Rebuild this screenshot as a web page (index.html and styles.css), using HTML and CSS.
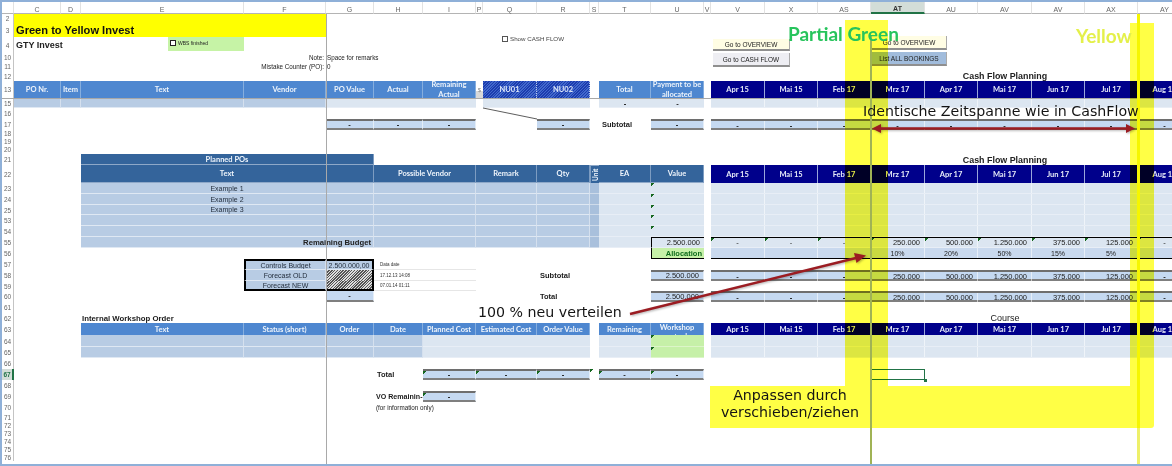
FILE: index.html
```html
<!DOCTYPE html>
<html lang="de">
<head>
<meta charset="utf-8">
<title>Green to Yellow Invest</title>
<link rel="stylesheet" href="styles.css">
</head>
<body>
<main class="page">
  <div class="row colhead">
    <span class="c-rh"></span>
    <span>C</span><span>D</span><span>E</span><span>F</span><span>G</span><span>H</span><span>I</span><span>P</span><span>Q</span><span>R</span><span>S</span><span>T</span><span>U</span><span>V</span><span>V</span><span>X</span><span>AS</span><span class="sel-col">AT</span><span>AU</span><span>AV</span><span>AV</span><span>AX</span><span>AY</span>
  </div>

  <div class="row h9"><span class="rh">2</span><div class="cell banner c-c to-g"></div></div>
  <div class="row h14"><span class="rh">3</span><div class="cell banner lt c-c to-g"><b class="title">Green to Yellow Invest</b></div></div>
  <div class="row h16"><span class="rh">4</span><div class="cell lt c-c to-f"><b class="subtitle">GTY Invest</b></div></div>
  <div class="row h9"><span class="rh">10</span><div class="cell n small c-e to-g">Note:</div><div class="cell lt small c-g to-p">Space for remarks</div></div>
  <div class="row h9"><span class="rh">11</span><div class="cell n small c-e to-g">Mistake Counter (PO):</div><div class="cell lt small c-g">0</div></div>
  <div class="row h10"><span class="rh">12</span><div class="cell heading c-au to-ax">Cash Flow Planning</div></div>
  <div class="row h17"><span class="rh">13</span>
    <div class="cell hd c-c">PO Nr.</div><div class="cell hd c-d">Item</div><div class="cell hd c-e">Text</div><div class="cell hd c-f">Vendor</div><div class="cell hd c-g">PO Value</div><div class="cell hd c-hh">Actual</div><div class="cell hd wrap c-i">Remaining Actual</div>
    <div class="cell tiny c-p">$</div>
    <div class="cell hatch c-q">NU01</div><div class="cell hatch c-r">NU02</div>
    <div class="cell hd c-t">Total</div><div class="cell hd wrap c-u">Payment to be allocated</div>
    <div class="band navy c-v to-end"><span>Apr 15</span><span>Mai 15</span><span>Feb 17</span><span>Mrz 17</span><span>Apr 17</span><span>Mai 17</span><span>Jun 17</span><span>Jul 17</span><span>Aug 17</span></div>
  </div>
  <div class="row h1 rule"></div>
  <div class="row h9"><span class="rh">15</span>
    <div class="cell mid c-c"></div><div class="cell mid c-d"></div><div class="cell mid c-e"></div><div class="cell mid c-f"></div>
    <div class="cell pale c-g"></div><div class="cell pale c-hh"></div><div class="cell pale c-i"></div>
    <div class="cell pale c-q"></div><div class="cell pale c-r"></div>
    <div class="cell pale bold c-t">-</div><div class="cell pale bold c-u">-</div>
    <div class="band pale c-v to-end"><span></span><span></span><span></span><span></span><span></span><span></span><span></span><span></span><span></span></div>
  </div>
  <div class="row h11"><span class="rh">16</span></div>
  <div class="row h11"><span class="rh">17</span>
    <div class="cell tot c-g">-</div><div class="cell tot c-hh">-</div><div class="cell tot c-i">-</div>
    <div class="cell tot c-r">-</div>
    <div class="cell label lt inset c-t">Subtotal</div>
    <div class="cell tot c-u">-</div>
    <div class="band tots c-v to-end"><span>-</span><span>-</span><span>-</span><span>-</span><span>-</span><span>-</span><span>-</span><span>-</span><span>-</span></div>
  </div>
  <div class="row h7"><span class="rh">18</span></div>
  <div class="row h8"><span class="rh">19</span></div>
  <div class="row h9"><span class="rh">20</span></div>
  <div class="row h11"><span class="rh">21</span><div class="cell hd dark c-e to-hh">Planned POs</div><div class="cell heading c-au to-ax">Cash Flow Planning</div></div>
  <div class="row h18"><span class="rh">22</span>
    <div class="cell hd dark c-e to-hh">Text</div><div class="cell hd dark c-hh to-p">Possible Vendor</div><div class="cell hd dark c-p to-r">Remark</div><div class="cell hd dark c-r">Qty</div><div class="cell hd dark vert c-s">Unit</div><div class="cell hd dark c-t">EA</div><div class="cell hd dark c-u">Value</div>
    <div class="band navy c-v to-end"><span>Apr 15</span><span>Mai 15</span><span>Feb 17</span><span>Mrz 17</span><span>Apr 17</span><span>Mai 17</span><span>Jun 17</span><span>Jul 17</span><span>Aug 17</span></div>
  </div>

  <div class="row h11"><span class="rh">23</span>
    <div class="cell mid body c-e to-hh">Example 1</div><div class="cell mid c-hh to-p"></div><div class="cell mid c-p to-r"></div><div class="cell mid c-r"></div><div class="cell deep c-s"></div><div class="cell pale c-t"></div><div class="cell pale mark c-u"></div>
    <div class="band pale c-v to-end"><span></span><span></span><span></span><span></span><span></span><span></span><span></span><span></span><span></span></div>
  </div>
  <div class="row h11"><span class="rh">24</span>
    <div class="cell mid body c-e to-hh">Example 2</div><div class="cell mid c-hh to-p"></div><div class="cell mid c-p to-r"></div><div class="cell mid c-r"></div><div class="cell deep c-s"></div><div class="cell pale c-t"></div><div class="cell pale mark c-u"></div>
    <div class="band pale c-v to-end"><span></span><span></span><span></span><span></span><span></span><span></span><span></span><span></span><span></span></div>
  </div>
  <div class="row h10"><span class="rh">25</span>
    <div class="cell mid body c-e to-hh">Example 3</div><div class="cell mid c-hh to-p"></div><div class="cell mid c-p to-r"></div><div class="cell mid c-r"></div><div class="cell deep c-s"></div><div class="cell pale c-t"></div><div class="cell pale mark c-u"></div>
    <div class="band pale c-v to-end"><span></span><span></span><span></span><span></span><span></span><span></span><span></span><span></span><span></span></div>
  </div>
  <div class="row h11"><span class="rh">53</span>
    <div class="cell mid c-e to-hh"></div><div class="cell mid c-hh to-p"></div><div class="cell mid c-p to-r"></div><div class="cell mid c-r"></div><div class="cell deep c-s"></div><div class="cell pale c-t"></div><div class="cell pale mark c-u"></div>
    <div class="band pale c-v to-end"><span></span><span></span><span></span><span></span><span></span><span></span><span></span><span></span><span></span></div>
  </div>
  <div class="row h11"><span class="rh">54</span>
    <div class="cell mid c-e to-hh"></div><div class="cell mid c-hh to-p"></div><div class="cell mid c-p to-r"></div><div class="cell mid c-r"></div><div class="cell deep c-s"></div><div class="cell pale c-t"></div><div class="cell pale mark c-u"></div>
    <div class="band pale c-v to-end"><span></span><span></span><span></span><span></span><span></span><span></span><span></span><span></span><span></span></div>
  </div>
  <div class="row h11"><span class="rh">55</span>
    <div class="cell mid n bold budget c-e to-hh">Remaining Budget</div><div class="cell mid c-hh to-p"></div><div class="cell mid c-p to-r"></div><div class="cell mid c-r"></div><div class="cell deep c-s"></div><div class="cell pale c-t"></div>
    <div class="cell pale num box-top box-left c-u">2.500.000</div>
    <div class="band pale box-top c-v to-end"><span class="mark">-</span><span class="mark">-</span><span class="mark">-</span><span class="mark num">250.000</span><span class="mark num">500.000</span><span class="mark num">1.250.000</span><span class="mark num">375.000</span><span class="mark num">125.000</span><span class="mark">-</span></div>
  </div>
  <div class="row h11"><span class="rh">56</span>
    <div class="cell alloc box-bottom box-left c-u">Allocation</div>
    <div class="band alt box-bottom c-v to-end"><span></span><span></span><span></span><span>10%</span><span>20%</span><span>50%</span><span>15%</span><span>5%</span><span></span></div>
  </div>
  <div class="row h11"><span class="rh">57</span>
    <div class="cell mid body frame-top frame-left c-f">Controls Budget</div><div class="cell mid body frame-top frame-right c-g">2.500.000,00</div>
    <div class="cell lt micro c-hh to-p">Data date</div>
  </div>
  <div class="row h11"><span class="rh">58</span>
    <div class="cell mid body frame-left c-f">Forecast OLD</div><div class="cell stripes frame-right c-g"></div>
    <div class="cell lt micro c-hh to-p">17.12.13 14:08</div>
    <div class="cell label lt inset c-r">Subtotal</div>
    <div class="cell tot num c-u">2.500.000</div>
    <div class="band tots c-v to-end"><span>-</span><span>-</span><span>-</span><span class="num">250.000</span><span class="num">500.000</span><span class="num">1.250.000</span><span class="num">375.000</span><span class="num">125.000</span><span>-</span></div>
  </div>
  <div class="row h10"><span class="rh">59</span>
    <div class="cell mid body frame-left frame-bottom c-f">Forecast NEW</div><div class="cell stripes frame-right frame-bottom c-g"></div>
    <div class="cell lt micro c-hh to-p">07.01.14 01:11</div>
  </div>
  <div class="row h11"><span class="rh">60</span>
    <div class="cell tot plain c-g">-</div>
    <div class="cell label lt inset c-r">Total</div>
    <div class="cell tot num c-u">2.500.000</div>
    <div class="band tots c-v to-end"><span>-</span><span>-</span><span>-</span><span class="num">250.000</span><span class="num">500.000</span><span class="num">1.250.000</span><span class="num">375.000</span><span class="num">125.000</span><span>-</span></div>
  </div>
  <div class="row h11"><span class="rh">61</span></div>
  <div class="row h10"><span class="rh">62</span><div class="cell lt label section c-e to-g">Internal Workshop Order</div><div class="cell heading regular c-au to-ax">Course</div></div>
  <div class="row h12"><span class="rh">63</span>
    <div class="cell hd c-e">Text</div><div class="cell hd c-f">Status (short)</div><div class="cell hd c-g">Order</div><div class="cell hd c-hh">Date</div><div class="cell hd c-i">Planned Cost</div><div class="cell hd c-p to-r">Estimated Cost</div><div class="cell hd c-r">Order Value</div><div class="cell hd c-t">Remaining</div><div class="cell hd top c-u">Workshop actual</div>
    <div class="band navy c-v to-end"><span>Apr 15</span><span>Mai 15</span><span>Feb 17</span><span>Mrz 17</span><span>Apr 17</span><span>Mai 17</span><span>Jun 17</span><span>Jul 17</span><span>Aug 17</span></div>
  </div>
  <div class="row h12"><span class="rh">64</span>
    <div class="cell mid c-e"></div><div class="cell mid c-f"></div><div class="cell mid c-g"></div><div class="cell mid c-hh"></div>
    <div class="cell pale c-i"></div><div class="cell pale c-p to-r"></div><div class="cell pale c-r"></div><div class="cell pale c-t"></div><div class="cell lime mark c-u"></div>
    <div class="band pale c-v to-end"><span></span><span></span><span></span><span></span><span></span><span></span><span></span><span></span><span></span></div>
  </div>
  <div class="row h11"><span class="rh">65</span>
    <div class="cell mid c-e"></div><div class="cell mid c-f"></div><div class="cell mid c-g"></div><div class="cell mid c-hh"></div>
    <div class="cell pale c-i"></div><div class="cell pale c-p to-r"></div><div class="cell pale c-r"></div><div class="cell pale c-t"></div><div class="cell lime mark c-u"></div>
    <div class="band pale c-v to-end"><span></span><span></span><span></span><span></span><span></span><span></span><span></span><span></span><span></span></div>
  </div>
  <div class="row h11"><span class="rh">66</span></div>
  <div class="row h11"><span class="rh sel-row">67</span>
    <div class="cell lt label inset c-hh">Total</div>
    <div class="cell tot mark c-i">-</div><div class="cell tot mark c-p to-r">-</div><div class="cell tot mark c-r">-</div><div class="cell mark c-s"></div><div class="cell tot mark c-t">-</div><div class="cell tot mark c-u">-</div>
    <div class="cell selected c-at"></div>
  </div>
  <div class="row h11"><span class="rh">68</span></div>
  <div class="row h11"><span class="rh">69</span><div class="cell lt label tight c-hh">VO Remainin-</div><div class="cell tot mark c-i">-</div></div>
  <div class="row h11"><span class="rh">70</span><div class="cell lt note c-hh to-q">(for information only)</div></div>
  <div class="row h8"><span class="rh">71</span></div>
  <div class="row h8"><span class="rh">72</span></div>
  <div class="row h8"><span class="rh">73</span></div>
  <div class="row h8"><span class="rh">74</span></div>
  <div class="row h8"><span class="rh">75</span></div>
  <div class="row h8"><span class="rh">76</span></div>

  <div class="overlays">
    <div class="freeze"></div>
    <div class="handle"></div>
    <label class="wbs"><span class="check dark"></span>WBS finished</label>
    <label class="show"><span class="check"></span>Show CASH FLOW</label>
    <button class="btn cream go1">Go to OVERVIEW</button>
    <button class="btn grey go2">Go to CASH FLOW</button>
    <button class="btn cream go3">Go to OVERVIEW</button>
    <button class="btn steel go4">List ALL BOOKINGS</button>

    <div class="marker col-left"></div>
    <div class="marker col-right"></div>
    <div class="marker panel"></div>
    <div class="line-olive"></div>
    <div class="line-yellow"></div>

    <svg class="arrows" width="1172" height="466" viewBox="0 0 1172 466" aria-hidden="true">
      <line class="thin" x1="483" y1="108" x2="537" y2="119"/>
      <g class="red">
        <line x1="630" y1="314" x2="856" y2="258"/>
        <polygon points="866,255.5 854,253 856.5,263"/>
        <line x1="880" y1="128.5" x2="1127" y2="128.5"/>
        <polygon points="872,128.5 881,124 881,133"/>
        <polygon points="1135,128.5 1126,124 1126,133"/>
      </g>
    </svg>

    <span class="note-title green">Partial Green</span>
    <span class="note-title lemon">Yellow</span>
    <span class="callout span-note">Identische Zeitspanne wie in CashFlow</span>
    <span class="callout split-note">100 % neu verteilen</span>
    <span class="callout drag-note">Anpassen durch<br>verschieben/ziehen</span>
  </div>
</main>
</body>
</html>
```
FILE: styles.css
```css
:root {
  --cols: [rh] 12px [c] 47px [d] 20px [e] 163px [f] 82px [g] 48px [hh] 49px [i] 53px [p] 7px [q] 54px [r] 53px [s] 9px [t] 52px [u] 53px [gap] 7px [v] 54px [x] 53px [as] 53px [at] 54px [au] 53px [av] 54px [aw] 53px [ax] 53px [ay] 54px [end];
}
html, body { margin: 0; background: #fff; }
body { overflow: hidden; }

.page {
  position: relative;
  box-sizing: border-box;
  width: 1172px;
  height: 466px;
  overflow: hidden;
  border: solid #8fb0d8;
  border-width: 2px 0 2px 2px;
  background: #fff;
  filter: blur(.3px);
  font: 7.5px "Liberation Sans", Arial, sans-serif;
  color: #222;
}

.row { display: grid; grid-template-columns: var(--cols); grid-template-rows: 100%; white-space: nowrap; }
.h1 { height: 1px; } .h7 { height: 7px; } .h8 { height: 8px; } .h9 { height: 9px; } .h10 { height: 10px; }
.h11 { height: 11px; } .h12 { height: 12px; } .h14 { height: 14px; } .h16 { height: 16px; } .h17 { height: 17px; } .h18 { height: 18px; }
.rule { background: #a8a8a8; }

.colhead { height: 12px; font-size: 7px; color: #666; }
.colhead span { display: flex; align-items: flex-end; justify-content: center; border-right: 1px solid #e2e2e2; border-bottom: 1px solid #b4b4b4; }
.colhead .sel-col { background: #d3ddd8; border-bottom: 2px solid #217346; color: #333; font-weight: bold; }
.c-rh { grid-column: rh; }

.rh { grid-column: rh; display: flex; align-items: center; justify-content: center; font-size: 6.5px; color: #666; border-right: 1px solid #c4c4c4; }
.sel-row { font-weight: bold; color: #217346; background: #d3ddd8; border-right: 2px solid #217346; }

.c-c { grid-column-start: c; } .c-d { grid-column-start: d; } .c-e { grid-column-start: e; } .c-f { grid-column-start: f; }
.c-g { grid-column-start: g; } .c-hh { grid-column-start: hh; } .c-i { grid-column-start: i; } .c-p { grid-column-start: p; }
.c-q { grid-column-start: q; } .c-r { grid-column-start: r; } .c-s { grid-column-start: s; } .c-t { grid-column-start: t; }
.c-u { grid-column-start: u; } .c-v { grid-column-start: v; } .c-at { grid-column-start: at; } .c-au { grid-column-start: au; }
.to-e { grid-column-end: e; } .to-f { grid-column-end: f; } .to-g { grid-column-end: g; } .to-hh { grid-column-end: hh; }
.to-p { grid-column-end: p; } .to-q { grid-column-end: q; } .to-r { grid-column-end: r; } .to-ax { grid-column-end: ax; } .to-end { grid-column-end: end; }

.cell { display: flex; align-items: center; justify-content: center; min-width: 0; box-sizing: border-box; overflow: hidden; grid-row: 1; }
.lt { justify-content: flex-start; padding-left: 1px; }
.n { justify-content: flex-end; padding-right: 2px; }
.small { font-size: 6.3px; }
.bold { font-weight: bold; }
.budget { font-size: 7.7px; }

.banner { background: #ffff00; padding-left: 2px; }
.title { font-size: 11.1px; color: #111; }
.subtitle { font-size: 9px; padding-left: 1px; }
.heading { font: bold 8.9px "Liberation Sans", Arial, sans-serif; color: #222; overflow: visible; }
.heading.regular { font-weight: normal; font-size: 9px; }

.hd { background: #4e87d0; color: #eef4fb; font: bold 7.5px Lato, sans-serif; border-right: 1px solid #86aede; }
.hd.dark { background: #34649b; border-right-color: #7d9cc1; border-bottom: 1px solid #8ea8c8; }
.wrap { white-space: normal; text-align: center; line-height: 9.5px; }
.top { align-items: flex-start; white-space: normal; text-align: center; line-height: 9px; }
.vert { writing-mode: vertical-rl; transform: rotate(180deg); font-size: 6.5px; padding: 0; }
.tiny { font-size: 6px; color: #888; background: linear-gradient(#fff 60%, #d8d8d8 60%); }
.hatch { color: #dfe8fa; font: bold 7.5px Lato, sans-serif; background: repeating-linear-gradient(135deg, #1c3cae 0 1px, #4168cc 1px 2px); border-right: 1px dotted #b9c8ec; }

.mid { background: #b8cce4; border-right: 1px solid #d5e0ee; border-bottom: 1px solid #dfe8f3; }
.body { color: #1f2a38; font-size: 7px; }
.deep { background: #a9c0dc; border-bottom: 1px solid #cfdbea; }
.pale { background: #dce6f1; border-bottom: 1px solid #e8eef6; }
.lime { background: #c6f0a8; border-bottom: 1px solid #dcf5c8; }

.band { display: grid; grid-template-columns: subgrid; grid-row: 1; min-width: 0; box-sizing: border-box; }
.band span { display: flex; align-items: center; justify-content: center; min-width: 0; border-right: 1px solid rgba(255,255,255,.55); overflow: visible; }
.band.navy { background: #00008b; color: #e7ecf8; font: bold 7.5px Lato, sans-serif; }
.band.navy span { border-right-color: #9aa6da; }
.band.pale { border-bottom: 1px solid #e8eef6; }
.band.alt { background: #c9d9ee; font-size: 7px; }

.tot { background: #c5d9f1; border-top: 2px solid #6e6e6e; border-bottom: 2px solid #7f7f7f; border-right: 1px solid #e4edf8; font-size: 7.5px; font-weight: bold; }
.tot.plain { border-top: 0; }
.tots { background: #c5d9f1; border-top: 2px solid #6e6e6e; border-bottom: 2px solid #7f7f7f; font-size: 7.5px; font-weight: bold; }
.tot.num, .tots .num { font-weight: normal; font-size: 7.5px; }
.num { display: flex; align-items: center; justify-content: flex-end !important; padding-right: 4px; font-size: 7.5px; }
.label { font-weight: bold; font-size: 7.5px; color: #1a1a1a; overflow: visible; }
.inset { padding-left: 3px; }
.section { font-size: 7.8px; }
.tight { font-size: 7.1px; padding-left: 2px; }
.note { font-size: 6.3px; padding-left: 2px; overflow: visible; }
.micro { font-size: 4.5px; padding-left: 6px; border-bottom: 1px solid #e6e6e6; color: #333; }

.mark { background-image: linear-gradient(135deg, #14661e 2.5px, transparent 2.6px); background-size: 5px 5px; background-repeat: no-repeat; }

.box-top { border-top: 1.5px solid #000; }
.box-bottom { border-bottom: 1.5px solid #000; }
.box-left { border-left: 1.5px solid #000; }
.alloc { background: #c6f0a8; color: #0c6b1a; font-size: 7.5px; font-weight: bold; justify-content: flex-end; padding-right: 2px; }

.frame-top { border-top: 2px solid #000; }
.frame-bottom { border-bottom: 2px solid #000; }
.frame-left { border-left: 2px solid #000; }
.frame-right { border-right: 2px solid #000; }
.stripes { background: repeating-linear-gradient(135deg, #555 0 1px, #ddd 1px 2px); }

.selected { outline: 1.5px solid #217346; outline-offset: -1px; overflow: visible; }

/* floating layer: form controls and the reviewer's markup drawn over the sheet */
.overlays { position: absolute; left: -2px; top: -2px; width: 1172px; height: 466px; pointer-events: none; }
.overlays > * { position: absolute; }
.freeze { left: 326px; top: 14px; width: 1px; height: 450px; background: #a9a9a9; }
.handle { left: 923.5px; top: 378.5px; width: 3px; height: 3px; background: #217346; }

.wbs { left: 168px; top: 37px; width: 76px; height: 14px; background: #c6f3a6; display: flex; align-items: flex-start; padding: 3px 0 0 2px; box-sizing: border-box; font-size: 5px; gap: 2px; }
.show { left: 502px; top: 35px; display: flex; align-items: center; gap: 2px; font-size: 6.2px; color: #444; }
.check { display: inline-block; box-sizing: border-box; width: 6px; height: 6px; border: 1px solid #555; background: #fff; }
.check.dark { border-color: #222; }

.btn { box-sizing: border-box; margin: 0; padding: 0; font: 6.5px "Liberation Sans", Arial, sans-serif; color: #222; border: 0; border-right: 1px solid #aaa; border-bottom: 2px solid #8f8f8f; }
.cream { background: #fffde4; }
.grey { background: #eeeef3; }
.steel { background: #a1bcdc; }
.go1 { left: 713px; top: 39px; width: 77px; height: 12px; }
.go2 { left: 713px; top: 53px; width: 77px; height: 14px; }
.go3 { left: 872px; top: 36px; width: 75px; height: 14px; }
.go4 { left: 872px; top: 52px; width: 75px; height: 14px; }

.marker { background: #ffff45; mix-blend-mode: multiply; }
.col-left { left: 845px; top: 20px; width: 43px; height: 366px; }
.col-right { left: 1130px; top: 23px; width: 24px; height: 363px; }
.panel { left: 710px; top: 386px; width: 444px; height: 42px; border-radius: 0 0 3px 0; }
.line-olive { left: 870px; top: 36px; width: 2px; height: 428px; background: #a0b355; }
.line-yellow { left: 1136.5px; top: 14px; width: 3px; height: 450px; background: linear-gradient(#f6f600 92%, #eef06a 92%); }

.arrows { left: 0; top: 0; }
.thin { stroke: #333; stroke-width: .8; }
.red { filter: drop-shadow(1px 1px 1px rgba(0,0,0,.3)); }
.red line { stroke: #9b1c22; stroke-width: 2.4; }
.red polygon { fill: #9b1c22; }

.note-title { font: bold 19px Lato, sans-serif; white-space: nowrap; }
.green { left: 788px; top: 22px; color: #27c45c; }
.lemon { left: 1076px; top: 24px; color: #e4f04a; }
.callout { font-family: "DejaVu Sans", Verdana, sans-serif; color: #141414; white-space: nowrap; line-height: 17px; font-size: 14.2px; }
.span-note { left: 863px; top: 103px; }
.split-note { left: 478px; top: 304px; }
.drag-note { left: 710px; top: 387px; width: 160px; text-align: center; }
```
